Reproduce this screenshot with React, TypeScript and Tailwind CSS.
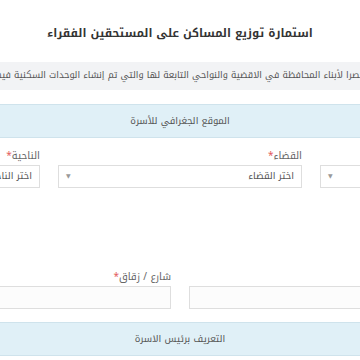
import React from "react";

const font = { fontFamily: '"Noto Kufi Arabic", "DejaVu Sans", sans-serif' };

function Label({ text }: { text: string }) {
  return (
    <label className="mb-[3px] block text-[10px] leading-[12px] text-[#666]">
      {text}
      <span className="text-[#e35d5d]">*</span>
    </label>
  );
}

function SelectBox({ placeholder }: { placeholder: string }) {
  return (
    <div className="flex h-[23px] items-center justify-between border border-[#dedede] bg-white px-[7px]">
      <span className="whitespace-nowrap text-[9.5px] text-[#555]">{placeholder}</span>
      <span className="text-[6px] text-[#999]">▼</span>
    </div>
  );
}

function PanelHeader({ title }: { title: string }) {
  return (
    <div className="flex h-[34px] items-center justify-center border-y border-[#cfe3ec] bg-[#e0f0f7] text-[9.5px] text-[#555]">
      {title}
    </div>
  );
}

export default function App() {
  return (
    <div dir="rtl" style={font} className="flex h-[360px] w-[360px] justify-center overflow-hidden bg-white">
      <div className="w-[768px] shrink-0">
        <h1 className="pt-[21px] text-center text-[11.5px] font-bold leading-[24px] text-[#333]">
          استمارة توزيع المساكن على المستحقين الفقراء
        </h1>
        <div className="mt-[17px] flex h-[28px] items-center overflow-hidden whitespace-nowrap bg-[#f2f3f5] pr-[199px] text-[9.2px] text-[#555]">
          حصرا لأبناء المحافظة في الاقضية والنواحي التابعة لها والتي تم إنشاء الوحدات السكنية فيها
        </div>
        <div className="mt-[14px]">
          <PanelHeader title="الموقع الجغرافي للأسرة" />
        </div>
        <div className="mt-[12px] grid grid-cols-3 gap-x-[18px]">
          <div>
            <Label text="المحافظة" />
            <SelectBox placeholder="اختر المحافظة" />
          </div>
          <div>
            <Label text="القضاء" />
            <SelectBox placeholder="اختر القضاء" />
          </div>
          <div>
            <Label text="الناحية" />
            <SelectBox placeholder="اختر الناحية" />
          </div>
        </div>
        <div className="mt-[83px] grid grid-cols-2 gap-x-[18px]">
          <div>
            <Label text="محلة" />
            <div className="h-[23px] border border-[#dedede] bg-[#fcfcfc]" />
          </div>
          <div>
            <Label text="شارع / زقاق" />
            <div className="h-[23px] border border-[#dedede] bg-[#fcfcfc]" />
          </div>
        </div>
        <div className="mt-[13px]">
          <PanelHeader title="التعريف برئيس الاسرة" />
        </div>
      </div>
    </div>
  );
}
